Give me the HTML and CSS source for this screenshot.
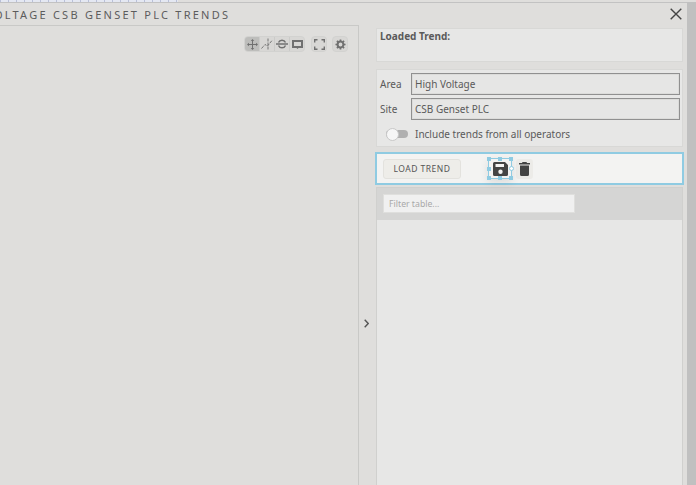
FILE: index.html
```html
<!DOCTYPE html>
<html lang="en">
<head>
    <meta charset="UTF-8">
    <meta name="viewport" content="width=device-width, initial-scale=1.0">
    <title>High Voltage CSB Genset PLC Trends</title>
    <link rel="stylesheet" href="styles.css">
</head>
<body>
    <div class="top-strip"><div class="ruler"></div></div>
    <div class="dialog">
        <div class="title-bar">
            <h1>HIGH VOLTAGE CSB GENSET PLC TRENDS</h1>
            <button class="close-btn" aria-label="Close">
                <svg width="12" height="12" viewBox="0 0 12 12"><path d="M.7.7 11.300 11.300M11.300.7.7 11.300" stroke="#444" stroke-width="1.400" fill="none"/></svg>
            </button>
        </div>
        <div class="dialog-body">
            <div class="chart-panel">
                <div class="chart-tools">
                    <div class="tool-group">
                        <span class="tool active">
                            <svg width="11" height="11" viewBox="0 0 11 11"><path d="M5.500 0 7.200 2H6v3h3V3.800L11 5.500 9 7.200V6H6v3h1.200L5.500 11 3.800 9H5V6H2v1.200L0 5.500l2-1.700V5h3V2H3.800z" fill="#707070"/></svg>
                        </span>
                        <span class="tool">
                            <svg width="12" height="12" viewBox="0 0 12 12"><path d="M.5 10.500 4 6.500l2.500 1.500 4.500-5.500M7 .5v11" stroke="#777" stroke-width="1" fill="none" stroke-dasharray="3 1"/></svg>
                        </span>
                        <span class="tool">
                            <svg width="12" height="12" viewBox="0 0 12 12"><path d="M0 6h12" stroke="#707070" stroke-width="1.500"/><path d="M2.500 4.500a3.800 3.800 0 0 1 7 0M2.500 7.500a3.800 3.800 0 0 0 7 0" stroke="#707070" stroke-width="1.500" fill="none"/></svg>
                        </span>
                        <span class="tool">
                            <svg width="11" height="9" viewBox="0 0 11 9"><path fill-rule="evenodd" d="M0 0h11v8H6.500L5.500 9l-1-1H0zM2 2v4h7V2z" fill="#707070"/></svg>
                        </span>
                    </div>
                    <span class="tool single">
                        <svg width="11" height="11" viewBox="0 0 11 11"><path d="M.7 3.500V.7h2.800M7.500.7h2.800v2.800M10.300 7.500v2.800H7.500M3.500 10.300H.7V7.500" stroke="#707070" stroke-width="1.400" fill="none"/></svg>
                    </span>
                    <span class="tool single gear">
                        <svg width="11" height="11" viewBox="0 0 12 12"><circle cx="6" cy="6" r="3.200" fill="none" stroke="#707070" stroke-width="2.200"/><path d="M6 .5v2M6 9.500v2M.5 6h2M9.500 6h2M2.100 2.100l1.400 1.400M8.500 8.500l1.400 1.400M9.900 2.100 8.500 3.500M3.500 8.500 2.100 9.900" stroke="#707070" stroke-width="1.800"/></svg>
                    </span>
                </div>
            </div>
            <div class="collapse-col">
                <svg width="5" height="9" viewBox="0 0 5 9"><path d="M.7.7 4.200 4.500.7 8.300" stroke="#555" stroke-width="1.400" fill="none"/></svg>
            </div>
            <div class="side-panel">
                <div class="box loaded-box"><strong>Loaded Trend:</strong></div>
                <div class="box fields-box">
                    <div class="field-row">
                        <label>Area</label>
                        <div class="field-value">High Voltage</div>
                    </div>
                    <div class="field-row">
                        <label>Site</label>
                        <div class="field-value">CSB Genset PLC</div>
                    </div>
                    <div class="toggle-row">
                        <span class="toggle"><span class="knob"></span></span>
                        <span>Include trends from all operators</span>
                    </div>
                </div>
                <div class="actions-box">
                    <button class="load-btn">LOAD TREND</button>
                    <div class="icon-actions">
                        <span class="selected-icon">
                            <svg width="15" height="14" viewBox="0 0 15 14"><path fill-rule="evenodd" d="M1.500 0H12l3 3v9.500a1.500 1.500 0 0 1-1.500 1.500h-12A1.500 1.500 0 0 1 0 12.500v-11A1.500 1.500 0 0 1 1.500 0zM2.500 2v3h8.500V2zM7.500 7.500a2.200 2.200 0 1 0 0 4.400 2.200 2.200 0 0 0 0-4.400z" fill="#444"/></svg>
                            <i class="grip tl"></i><i class="grip tc"></i><i class="grip tr"></i>
                            <i class="grip ml"></i><i class="grip mr"></i>
                            <i class="grip bl"></i><i class="grip bc"></i><i class="grip br"></i>
                        </span>
                        <span class="trash-icon">
                            <svg width="11" height="14" viewBox="0 0 11 14"><path d="M3.500 0h4l.5 1h3v1.500H0V1h3zM1 3.500h9v9A1.500 1.500 0 0 1 8.500 14h-6A1.500 1.500 0 0 1 1 12.500z" fill="#444"/></svg>
                        </span>
                    </div>
                </div>
                <div class="table-box">
                    <div class="table-filter">
                        <input type="text" placeholder="Filter table...">
                    </div>
                </div>
            </div>
            <div class="scroll-gutter"></div>
        </div>
    </div>
</body>
</html>
```

FILE: styles.css
```css
html, body {
    height: 100%;
}

body {
    font-family: "Noto Sans", "Open Sans", sans-serif;
    background-color: #dfdedc;
    color: #5a5a5a;
    margin: 0;
    height: 485px;
    overflow: hidden;
    display: flex;
    flex-direction: column;
}

.top-strip {
    height: 2px;
    background-color: #dfdedc;
    border-bottom: 1px solid #c2c2c2;
    flex: none;
}

.ruler {
    width: 178px;
    height: 2px;
    background-color: #e4e8f2;
    background-image: linear-gradient(to right, #b9c0d8 1px, transparent 1px);
    background-size: 8px 2px;
}

.dialog {
    flex: 1;
    display: flex;
    flex-direction: column;
    min-height: 0;
}

.title-bar {
    height: 22px;
    display: flex;
    align-items: center;
    justify-content: space-between;
    overflow: hidden;
    flex: none;
}

.title-bar h1 {
    margin: 0 0 0 -57px;
    font-size: 11px;
    font-weight: 400;
    letter-spacing: 2.250px;
    white-space: nowrap;
    color: #5c5c5c;
}

.close-btn {
    background: none;
    border: none;
    padding: 0;
    margin-right: 14px;
    display: flex;
    cursor: pointer;
}

.dialog-body {
    flex: 1;
    display: flex;
    min-height: 0;
}

.chart-panel {
    width: 359px;
    box-sizing: border-box;
    flex: none;
    border-top: 1px solid #c9c9c7;
    border-right: 1px solid #c9c9c7;
    padding: 10px 10px 0 0;
}

.chart-tools {
    display: flex;
    justify-content: flex-end;
    gap: 5px;
}

.tool-group {
    display: flex;
    margin-right: 1px;
    border: 1px solid #d2d2d0;
    border-radius: 4px;
    background-color: #d8d7d5;
}

.tool {
    width: 15px;
    height: 14px;
    box-sizing: border-box;
    display: flex;
    align-items: center;
    justify-content: center;
    border-left: 1px solid #cbcbc9;
}

.tool:first-child {
    border-left: none;
    width: 14px;
}

.tool.active {
    background-color: #bdbdbb;
    border-radius: 3px 0 0 3px;
}

.tool.single {
    width: 16px;
    height: 16px;
    border: 1px solid #d2d2d0;
    border-radius: 4px;
    background-color: #d8d7d5;
}

.collapse-col {
    width: 17px;
    flex: none;
    display: flex;
    align-items: center;
    justify-content: center;
    padding: 136px 3px 0 0;
    box-sizing: border-box;
}

.side-panel {
    width: 307px;
    flex: none;
    display: flex;
    flex-direction: column;
    font-size: 10px;
}

.box {
    background-color: #e7e7e6;
    border: 1px solid #d8d8d6;
    box-sizing: border-box;
}

.loaded-box {
    height: 34px;
    margin-top: 3px;
    padding: 0 3px;
    line-height: 15px;
}

.fields-box {
    height: 78px;
    margin-top: 7px;
    padding: 3px 2px 0 3px;
    display: flex;
    flex-direction: column;
    gap: 3px;
}

.field-row {
    display: flex;
    align-items: center;
    height: 22px;
}

.field-row label {
    width: 31px;
    flex: none;
}

.field-value {
    flex: 1;
    height: 22px;
    box-sizing: border-box;
    border: 1px solid #909090;
    background-color: #e6e6e5;
    padding-left: 3px;
    line-height: 20px;
    box-shadow: inset 0 0 0 1px #dcdcda;
}

.toggle-row {
    display: flex;
    align-items: center;
    gap: 7px;
    padding-left: 6px;
    height: 22px;
}

.toggle {
    width: 22px;
    height: 8px;
    background-color: #b0b0b0;
    border-radius: 4px;
    position: relative;
    flex: none;
}

.knob {
    position: absolute;
    left: 0;
    top: -2px;
    width: 13px;
    height: 13px;
    border-radius: 50%;
    background-color: #f6f6f6;
    border: 1px solid #c8c8c8;
    box-sizing: border-box;
}

.actions-box {
    height: 33px;
    box-sizing: border-box;
    margin: 5px -1px 0 -1px;
    border: 2px solid #8fcbe2;
    background-color: #f3f3f2;
    display: flex;
    align-items: center;
    padding-left: 6px;
}

.load-btn {
    font-family: inherit;
    width: 78px;
    height: 20px;
    font-size: 8.500px;
    letter-spacing: 0.500px;
    color: #555;
    background-color: #eeede9;
    border: 1px solid #e3e2de;
    border-radius: 3px;
    padding: 0;
}

.icon-actions {
    display: flex;
    align-items: center;
    margin-left: 27px;
    gap: 4px;
}

.selected-icon {
    position: relative;
    width: 24px;
    height: 21px;
    box-sizing: border-box;
    border: 1px solid #8fcbe2;
    display: flex;
    align-items: center;
    justify-content: center;
    box-shadow: 0 3px 8px rgba(0, 0, 0, 0.1);
}

.grip {
    position: absolute;
    width: 4px;
    height: 4px;
    background-color: #8fcbe2;
}

.grip.tl { left: -2px; top: -2px; }
.grip.tc { left: 9px; top: -2px; }
.grip.tr { right: -2px; top: -2px; }
.grip.ml { left: -2px; top: 8px; }
.grip.mr { right: -3px; top: 7px; border-radius: 50%; background-color: #fff; border: 1px solid #8fcbe2; box-sizing: border-box; width: 5px; height: 5px; }
.grip.bl { left: -2px; bottom: -2px; }
.grip.bc { left: 9px; bottom: -2px; }
.grip.br { right: -2px; bottom: -2px; }

.trash-icon {
    width: 17px;
    height: 20px;
    display: flex;
    align-items: center;
    justify-content: center;
    background-color: #ecebe8;
    border-radius: 3px;
}

.table-box {
    flex: 1;
    margin-top: 2px;
    background-color: #e7e7e6;
    border: 1px solid #d0d0ce;
    border-bottom: none;
}

.table-filter {
    height: 32px;
    background-color: #d5d5d4;
    padding: 6px 0 0 6px;
    box-sizing: border-box;
}

.table-filter input {
    display: block;
    width: 192px;
    height: 19px;
    box-sizing: border-box;
    border: 1px solid #dfdfdd;
    background-color: #f0f0f0;
    font-family: inherit;
    font-size: 8.700px;
    padding: 0 5px;
}

.table-filter input::placeholder {
    color: #a8a8a8;
}

.scroll-gutter {
    flex: 1;
    margin-left: 4px;
    margin-top: -23px;
    background-color: #c0c0c0;
}
```
